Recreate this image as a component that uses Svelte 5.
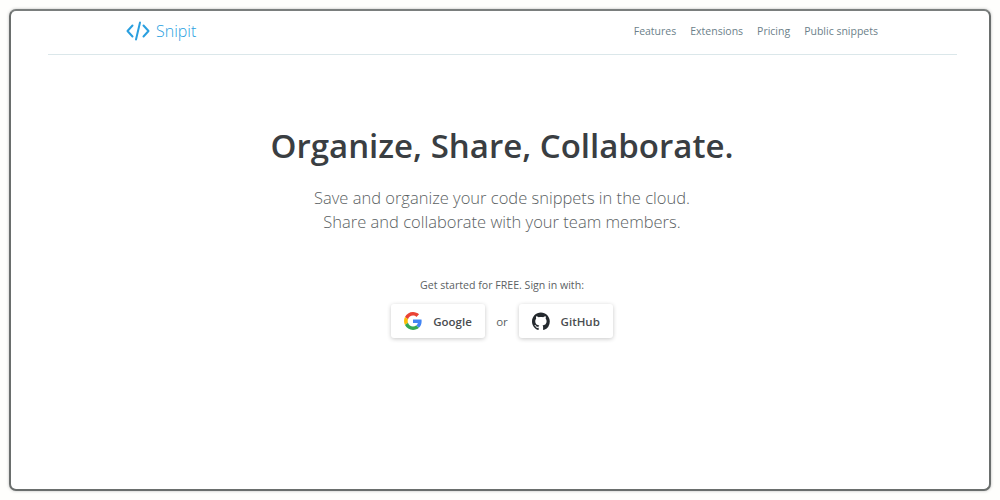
<script>
  const links = ['Features', 'Extensions', 'Pricing', 'Public snippets'];
</script>

<div class="page">
  <div class="window">
    <header>
      <div class="bar">
        <a class="brand" href="#top">
          <svg width="24" height="20" viewBox="0 0 24 20" fill="none" stroke="#2a9fdf" stroke-width="2" stroke-linecap="round" stroke-linejoin="round">
            <path d="M6.5 4.5 1.5 10l5 5.500" />
            <path d="M14 1.500 10 18.500" />
            <path d="M17.500 4.500l5 5.500-5 5.500" />
          </svg>
          <span>Snipit</span>
        </a>
        <nav>
          {#each links as link}
            <a href="#top">{link}</a>
          {/each}
        </nav>
      </div>
    </header>

    <main>
      <h1>Organize, Share, Collaborate.</h1>
      <p class="lead">Save and organize your code snippets in the cloud.<br />Share and collaborate with your team members.</p>
      <p class="cta">Get started for FREE. Sign in with:</p>
      <div class="buttons">
        <button>
          <svg width="18" height="18" viewBox="0 0 48 48">
            <path fill="#ea4335" d="M24 9.500c3.500 0 6.700 1.200 9.200 3.600l6.900-6.900C35.900 2.400 30.500 0 24 0 14.600 0 6.500 5.400 2.600 13.200l8 6.200C12.400 13.700 17.700 9.500 24 9.500z" />
            <path fill="#4285f4" d="M47 24.500c0-1.600-.1-3.100-.4-4.500H24v9h12.900c-.6 3-2.200 5.500-4.700 7.200l7.700 6C44.400 38 47 31.800 47 24.500z" />
            <path fill="#fbbc05" d="M10.600 28.600c-.5-1.500-.8-3-.8-4.600s.3-3.100.8-4.600l-8-6.200C.9 16.500 0 20.100 0 24s.9 7.500 2.600 10.800l8-6.200z" />
            <path fill="#34a853" d="M24 48c6.500 0 11.900-2.100 15.900-5.800l-7.700-6c-2.200 1.400-4.900 2.300-8.200 2.300-6.300 0-11.600-4.200-13.400-9.900l-8 6.200C6.500 42.600 14.600 48 24 48z" />
          </svg>
          <span>Google</span>
        </button>
        <span class="or">or</span>
        <button>
          <svg width="19" height="19" viewBox="0 0 16 16">
            <path fill="#24292e" d="M8 0C3.580 0 0 3.580 0 8c0 3.540 2.290 6.530 5.470 7.590.4.070.55-.17.55-.38 0-.19-.01-.82-.01-1.490-2.010.37-2.530-.49-2.690-.94-.09-.23-.48-.94-.82-1.130-.28-.15-.68-.52-.01-.53.63-.01 1.080.58 1.230.82.720 1.210 1.870.87 2.330.66.070-.52.280-.87.510-1.070-1.780-.2-3.640-.89-3.640-3.950 0-.87.310-1.590.820-2.150-.08-.2-.36-1.020.08-2.120 0 0 .67-.21 2.200.82.640-.18 1.320-.27 2-.27s1.360.09 2 .27c1.530-1.040 2.200-.82 2.200-.82.440 1.100.160 1.920.080 2.120.510.56.820 1.270.820 2.150 0 3.070-1.870 3.750-3.650 3.950.290.250.540.730.540 1.480 0 1.070-.010 1.930-.010 2.200 0 .210.150.460.550.380A8.010 8.010 0 0 0 16 8c0-4.420-3.580-8-8-8z" />
          </svg>
          <span>GitHub</span>
        </button>
      </div>
    </main>
  </div>
</div>

<style>
  :global(body) {
    margin: 0;
    background: #fefefc;
  }

  .page {
    box-sizing: border-box;
    width: 1000px;
    height: 500px;
    padding: 9px;
    font-family: "Open Sans", "Noto Sans", sans-serif;
  }

  .window {
    box-sizing: border-box;
    height: 482px;
    background: #fff;
    border: 2px solid #6a6e6d;
    border-top-color: #7a7e7d;
    border-radius: 7px;
    box-shadow: 0 0 3px rgba(90, 90, 90, 0.4);
    padding: 0 32px 0 37px;
  }

  header {
    border-bottom: 1px solid #dbe7ea;
    height: 43px;
  }

  .bar {
    box-sizing: border-box;
    height: 100%;
    padding: 0 79px 4px 78px;
    display: flex;
    align-items: center;
    justify-content: space-between;
  }

  a {
    text-decoration: none;
  }

  .brand {
    display: flex;
    align-items: center;
    gap: 6px;
    color: #2a9fdf;
    font-size: 16px;
    font-weight: 300;
  }

  nav {
    display: flex;
    gap: 14px;
  }

  nav a {
    color: #6c7f8a;
    font-size: 10.500px;
  }

  main {
    display: flex;
    flex-direction: column;
    align-items: center;
    padding-right: 1px;
  }

  h1 {
    margin: 69px 0 0;
    color: #3a3e42;
    font-size: 33px;
    line-height: 44px;
    font-weight: 600;
  }

  .lead {
    margin: 18px 0 0;
    color: #5b5f63;
    font-size: 16.500px;
    line-height: 24px;
    font-weight: 300;
    text-align: center;
  }

  .cta {
    margin: 43px 0 0;
    color: #5b5f63;
    font-size: 10.600px;
    line-height: 16px;
  }

  .buttons {
    margin: 11px 0 0;
    display: flex;
    align-items: center;
    gap: 11px;
  }

  button {
    box-sizing: border-box;
    width: 94px;
    height: 34px;
    padding: 0 13px;
    display: flex;
    align-items: center;
    gap: 11px;
    border: none;
    border-radius: 3px;
    background: #fff;
    box-shadow: 0 1px 4px rgba(0, 0, 0, 0.22);
    color: #4a4d50;
    font-family: inherit;
    font-size: 11.500px;
    font-weight: 600;
  }

  .or {
    color: #5b5f63;
    font-size: 11.500px;
  }
</style>
